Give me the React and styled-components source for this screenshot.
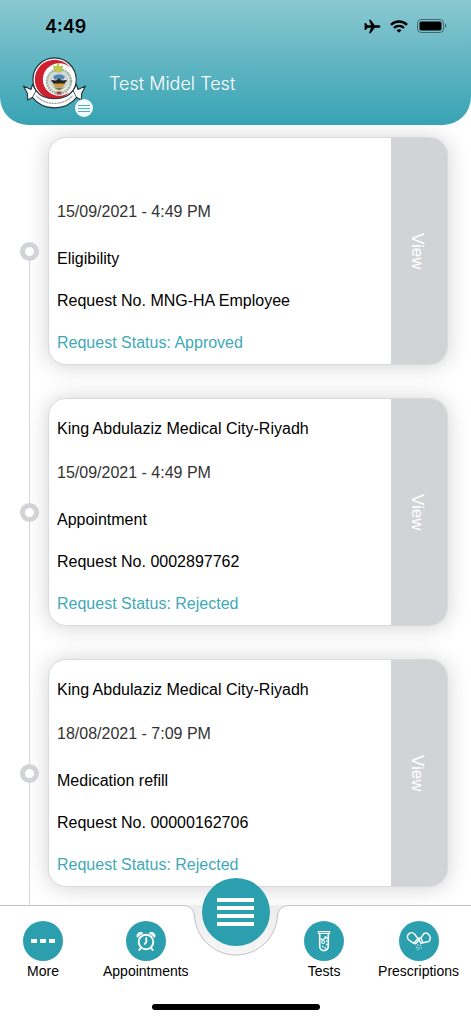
import React from "react";
import styled, { createGlobalStyle } from "styled-components";

const requests = [
  {
    id: 1,
    facility: "",
    date: "15/09/2021 - 4:49 PM",
    type: "Eligibility",
    number: "MNG-HA Employee",
    status: "Approved",
  },
  {
    id: 2,
    facility: "King Abdulaziz Medical City-Riyadh",
    date: "15/09/2021 - 4:49 PM",
    type: "Appointment",
    number: "0002897762",
    status: "Rejected",
  },
  {
    id: 3,
    facility: "King Abdulaziz Medical City-Riyadh",
    date: "18/08/2021 - 7:09 PM",
    type: "Medication refill",
    number: "00000162706",
    status: "Rejected",
  },
];

const PlaneIcon = () => (
  <svg width="17" height="15" viewBox="0 0 17 15">
    <path d="M16.500 7.500c0 .8-1 1.300-2.200 1.300h-3.500L6.600 14.300H5l2-5.500H3.600L1.900 10.900H.6V4.100h1.300l1.700 2.100H7L5 .7h1.600l4.200 5.500h3.500c1.200 0 2.200.5 2.200 1.300z" />
  </svg>
);

const WifiIcon = () => (
  <svg width="18" height="13" viewBox="0 0 18 13" fill="none" stroke="#000" strokeWidth="2.4">
    <path d="M1 4.900C5.400.4 12.600.4 17 4.900" />
    <path d="M4 8C6.800 5.200 11.200 5.200 14 8" />
    <path d="M9 12.800 6.500 10.300Q9 8.300 11.500 10.300Z" fill="#000" stroke="none" />
  </svg>
);

const BatteryIcon = () => (
  <svg width="30" height="14" viewBox="0 0 30 14">
    <rect x="0.500" y="0.500" width="26" height="13" rx="3.800" fill="none" stroke="#000" strokeOpacity="0.450" />
    <rect x="2.500" y="2.500" width="22" height="9" rx="1.800" />
    <path d="M28 4.800c1.600.6 1.600 3.800 0 4.400z" fillOpacity="0.500" />
  </svg>
);

const Logo = () => (
  <svg width="63" height="52" viewBox="0 0 63 52">
    <circle cx="31.500" cy="22.500" r="21.600" fill="#fff" stroke="#22333b" strokeWidth="1.200" />
    <circle cx="31.500" cy="22.500" r="19.700" fill="#cf2031" />
    <circle cx="36.200" cy="22.500" r="16.300" fill="#fff" />
    <circle cx="36" cy="24.500" r="12" fill="#e3e8e0" stroke="#9fb3a3" strokeWidth="2.600" strokeDasharray="2 0.700" />
    <circle cx="36" cy="24" r="8.600" fill="#d7dde2" stroke="#a7b4a4" strokeWidth="0.600" />
    <path d="M30 19.500q6-4.500 12 0l-1.500 3h-9z" fill="#5587b0" />
    <path d="M28 23l5 .5 3-2 3 2 5-.5-3 4.500H31z" fill="#1f2527" />
    <path d="M29.500 26.500h13l-2.500 3.500h-8z" fill="#d79b3c" />
    <path d="M31 30.500h10l-5 3z" fill="#6b7f52" />
    <path d="M33.500 34.500h5v3h-5z" fill="#a3494b" />
    <path d="M31.500 14.300 30.600 8.800l2.700 1.400L35 7.200l1.700 3 2.700-1.400-.9 5.500z" fill="#c9c943" stroke="#96a82d" strokeWidth="0.600" />
    <circle cx="35" cy="7" r="1" fill="#b4c23a" />
    <path
      d="M9.500 27.500 8 32.500.5 29l3.800 7.200L4.800 43l4.600-2.600C20 54.300 43 54.300 53.600 40.400l4.600 2.600.5-6.800L62.500 29 55 32.500l-1.500-5-3.500 6.200C42 44.500 21 44.500 13 33.700z"
      fill="#fff"
      stroke="#22333b"
      strokeWidth="1.100"
      strokeLinejoin="round"
    />
    <path d="M9.400 40.400 13 33.700M53.600 40.400 50 33.700" stroke="#22333b" strokeWidth="0.800" />
    <path d="M13.500 38.700C22 49 41 49 49.500 38.700" fill="none" stroke="#8b979b" strokeWidth="1.300" strokeDasharray="1.100 0.500" />
  </svg>
);

const AlarmIcon = () => (
  <svg width="20" height="20" viewBox="0 0 20 20" fill="none" stroke="#fff" strokeLinecap="round">
    <circle cx="10" cy="11" r="7.300" strokeWidth="1.900" />
    <path d="M10.300 7v4.200L8.700 13" strokeWidth="1.800" />
    <path d="M4.900 16.700 3.300 19M15.100 16.700l1.600 2.300" strokeWidth="1.900" />
    <path d="M1.200 6.100C-.4 3.400 3.400-.3 6.600 1.900zM18.800 6.100c1.600-2.700-2.200-6.400-5.400-4.200z" fill="#fff" strokeWidth="0.800" />
  </svg>
);

const TubeIcon = () => (
  <svg width="14" height="22" viewBox="0 0 14 22" fill="none" stroke="#fff" strokeWidth="1.200">
    <path d="M1.500 1.500h11v1.800h-11z" />
    <path d="M2.700 3.500v12.800a4.300 4.300 0 0 0 8.600 0V3.500" strokeWidth="1.600" />
    <path d="M3 8.700q2 1.400 4 0t4-.3" />
    <circle cx="6.200" cy="12" r="1.500" />
    <path d="M8.500 6v2.500M9 14.500h2M5 16.500h1.500M7.500 18h1.500M9 11h1.200" strokeWidth="1.700" />
  </svg>
);

const PillsIcon = () => (
  <svg width="26" height="20" viewBox="0 0 26 20" fill="none" stroke="#fff" strokeWidth="1.400" strokeLinejoin="round">
    <path d="M12 7.500 7.900 12.300 3.300 9.400C-1 5.800 3.200-.4 8 2.500z" />
    <path d="M12 7.500 13.300 9 9.500 12.800 7.900 12.300" />
    <path d="M14.800 6.800 18 2.500c4.500-2 8.300 4.500 4.700 8L17 11.800z" />
    <path d="M14.800 6.800 12.500 7.500l2.300 4.800 2.200-.5" />
    <path d="M11.800 13.500v1.200M14.500 13.800v1M10 16.500h1.200M13 16.200v1.200M11.500 18.800h1M15 16.800h.8" strokeWidth="1.100" />
  </svg>
);

const MoreIcon = () => (
  <svg width="24" height="4" viewBox="0 0 24 4" fill="#fff">
    <path d="M0 0h6v4H0zM9 0h6v4H9zM18 0h6v4h-6z" />
  </svg>
);

const leftTabs = [
  { label: "More", Icon: MoreIcon },
  { label: "Appointments", Icon: AlarmIcon },
];

const rightTabs = [
  { label: "Tests", Icon: TubeIcon },
  { label: "Prescriptions", Icon: PillsIcon },
];

const RequestCard = ({ request }) => (
  <Card>
    <CardBody>
      <Facility>{request.facility}</Facility>
      <DateText>{request.date}</DateText>
      <Details>
        <Text>{request.type}</Text>
        <Text>Request No. {request.number}</Text>
        <Text $color="#3fa9b7">Request Status: {request.status}</Text>
      </Details>
    </CardBody>
    <ViewButton type="button">
      <span>View</span>
    </ViewButton>
  </Card>
);

const TabGroup = ({ tabs, gap }) => (
  <Tabs $gap={gap}>
    {tabs.map(({ label, Icon }) => (
      <Tab key={label} href="#">
        <TabCircle>
          <Icon />
        </TabCircle>
        {label}
      </Tab>
    ))}
  </Tabs>
);

const App = () => {
  return (
    <Page>
      <GlobalStyle />
      <Header>
        <StatusBar>
          <Time>4:49</Time>
          <StatusIcons>
            <PlaneIcon />
            <WifiIcon />
            <BatteryIcon />
          </StatusIcons>
        </StatusBar>
        <UserRow>
          <LogoButton type="button" aria-label="Profile menu">
            <Logo />
            <Badge>
              <i />
              <i />
              <i />
            </Badge>
          </LogoButton>
          <UserName>Test Midel Test</UserName>
        </UserRow>
      </Header>

      <Timeline>
        {requests.map((request, index) => (
          <TimelineItem key={request.id}>
            <Rail>
              <RailTop $hidden={index === 0} />
              <Dot />
              <RailBottom />
            </Rail>
            <RequestCard request={request} />
          </TimelineItem>
        ))}
      </Timeline>

      <BottomNav>
        <NavSurface>
          <NavSide />
          <Notch width="112" height="114" viewBox="0 0 112 114">
            <defs>
              <linearGradient id="notch" x1="0" y1="0" x2="0" y2="1">
                <stop offset="0" stopColor="#ededee" />
                <stop offset="1" stopColor="#f7f7f8" />
              </linearGradient>
            </defs>
            <path d="M0 0H112V55H0z" fill="url(#notch)" />
            <path
              d="M0 .5H3C10 .5 14 5 14.500 11C16 33 34 50 56 50S96 33 97.500 11C98 5 102 .5 109 .5H112V114H0z"
              fill="#fff"
            />
            <path
              d="M0 .5H3C10 .5 14 5 14.500 11C16 33 34 50 56 50S96 33 97.500 11C98 5 102 .5 109 .5H112"
              fill="none"
              stroke="#c0c1c9"
            />
          </Notch>
          <NavSide />
        </NavSurface>
        <TabGroup tabs={leftTabs} gap={40} />
        <TabGroup tabs={rightTabs} gap={34} />
        <MenuButton type="button" aria-label="Menu">
          <i />
          <i />
          <i />
          <i />
        </MenuButton>
        <HomeIndicator />
      </BottomNav>
    </Page>
  );
};

export default App;

const GlobalStyle = createGlobalStyle`
  * {
    box-sizing: border-box;
  }
  body {
    margin: 0;
    background: #fff;
    color: #000;
    font-family: "Liberation Sans", Arial, sans-serif;
  }
  button {
    border: 0;
    padding: 0;
    font-family: inherit;
    cursor: pointer;
  }
  p, h1, h2, ol {
    margin: 0;
    padding: 0;
  }
`;

const Page = styled.div`
  min-height: 100vh;
  display: flex;
  flex-direction: column;
`;

const Header = styled.header`
  position: relative;
  z-index: 1;
  padding-bottom: 11px;
  background: linear-gradient(#8bc8d2, #37a3b3);
  border-radius: 0 0 28px 28px;
`;

const StatusBar = styled.div`
  height: 52px;
  padding: 0 24px 0 45px;
  display: flex;
  justify-content: space-between;
  align-items: center;
`;

const Time = styled.span`
  font-family: Inter, sans-serif;
  font-size: 18px;
  font-weight: 600;
`;

const StatusIcons = styled.div`
  display: flex;
  align-items: center;
  gap: 9px;
`;

const UserRow = styled.div`
  height: 62px;
  padding: 0 23px;
  display: flex;
  align-items: center;
  gap: 23px;
`;

const LogoButton = styled.button`
  position: relative;
  height: 52px;
  background: none;
`;

const Badge = styled.span`
  position: absolute;
  right: -7px;
  bottom: -8px;
  width: 18px;
  height: 18px;
  border-radius: 50%;
  background: #f1f9fa;
  display: flex;
  flex-direction: column;
  justify-content: center;
  align-items: center;
  gap: 2px;
  i {
    width: 12px;
    height: 1px;
    background: #55aebb;
  }
`;

const UserName = styled.h1`
  color: #fff;
  font-family: Inter, sans-serif;
  font-size: 18px;
  font-weight: 300;
`;

const Timeline = styled.ol`
  flex: 1;
  padding-top: 12px;
  list-style: none;
  display: flex;
  flex-direction: column;
`;

const TimelineItem = styled.li`
  padding: 0 23px 0 20px;
  display: flex;
  gap: 9px;
  &:last-child {
    flex: 1;
  }
`;

const Rail = styled.div`
  position: relative;
  z-index: 1;
  width: 19px;
  display: flex;
  flex-direction: column;
  align-items: center;
`;

const RailTop = styled.div`
  width: 1px;
  height: 105px;
  background: ${(props) => (props.$hidden ? "transparent" : "#d5d6da")};
`;

const Dot = styled.div`
  width: 19px;
  height: 19px;
  border: 5px solid #d2d3d7;
  border-radius: 50%;
  background: #fff;
`;

const RailBottom = styled.div`
  width: 1px;
  flex: 1;
  background: #d5d6da;
`;

const Card = styled.article`
  flex: 1;
  height: 228px;
  margin-bottom: 33px;
  display: flex;
  border: 1px solid #d9dadd;
  border-radius: 18px;
  background: #fff;
  overflow: hidden;
  box-shadow: 0 1px 22px rgba(0, 0, 0, 0.18);
  ${TimelineItem}:last-child & {
    margin-bottom: 18px;
  }
`;

const CardBody = styled.div`
  flex: 1;
  padding: 20px 8px 12px;
`;

const Text = styled.p`
  font-size: 16px;
  line-height: 20px;
  color: ${(props) => props.$color || "#000"};
`;

const Facility = styled.h2`
  min-height: 20px;
  margin-bottom: 24px;
  font-size: 16px;
  font-weight: 400;
  line-height: 20px;
`;

const DateText = styled(Text)`
  margin-bottom: 27px;
  color: #333;
`;

const Details = styled.div`
  display: flex;
  flex-direction: column;
  gap: 22px;
`;

const ViewButton = styled.button`
  width: 56px;
  padding-right: 4px;
  background: #d2d3d7;
  color: #fff;
  font-size: 17px;
  display: flex;
  justify-content: center;
  align-items: center;
  span {
    writing-mode: vertical-rl;
  }
`;

const BottomNav = styled.nav`
  position: sticky;
  z-index: 2;
  bottom: 0;
  height: 114px;
  padding: 16px 12px 0 23px;
  display: flex;
  justify-content: space-between;
  align-items: flex-start;
`;

const NavSurface = styled.div`
  position: absolute;
  inset: 0;
  display: flex;
`;

const NavSide = styled.div`
  flex: 1;
  background: #fff;
  border-top: 1px solid #c0c1c9;
`;

const Notch = styled.svg`
  display: block;
`;

const Tabs = styled.div`
  position: relative;
  display: flex;
  gap: ${(props) => props.$gap}px;
`;

const Tab = styled.a`
  display: flex;
  flex-direction: column;
  align-items: center;
  gap: 2px;
  color: #000;
  font-size: 14px;
  line-height: 16px;
  text-decoration: none;
`;

const TabCircle = styled.span`
  width: 40px;
  height: 40px;
  border-radius: 50%;
  background: #2c9fae;
  display: flex;
  justify-content: center;
  align-items: center;
`;

const MenuButton = styled.button`
  position: absolute;
  top: -27px;
  left: 50%;
  width: 68px;
  height: 68px;
  margin-left: -34px;
  border-radius: 50%;
  background: #2c9fae;
  display: flex;
  flex-direction: column;
  justify-content: center;
  align-items: center;
  gap: 4px;
  i {
    width: 37px;
    height: 4px;
    background: #fff;
  }
`;

const HomeIndicator = styled.div`
  position: absolute;
  bottom: 9px;
  left: 50%;
  width: 168px;
  height: 6px;
  margin-left: -84px;
  border-radius: 3px;
  background: #000;
`;
